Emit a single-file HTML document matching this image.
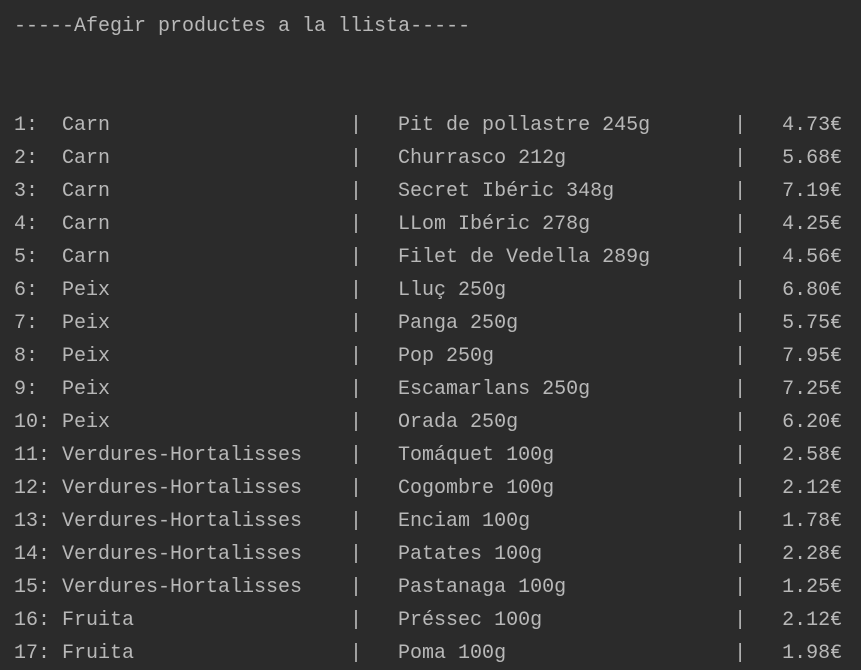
<!DOCTYPE html>
<html><head><meta charset="utf-8"><style>
html,body{margin:0;padding:0;background:#2b2b2b;width:861px;height:670px;overflow:hidden}
.t{position:absolute;left:14px;top:10px;font-family:"Liberation Mono",monospace;font-size:20px;line-height:33px;color:#b8b8b8;white-space:pre}
.r span{display:inline-block;white-space:pre}
.a{width:28ch}.b{width:4ch}.c{width:28ch}
</style></head><body><div class="t"><div>-----Afegir productes a la llista-----</div><div>&nbsp;</div><div>&nbsp;</div><div class="r"><span class="a">1:  Carn</span><span class="b">|</span><span class="c">Pit de pollastre 245g</span><span class="b">|</span><span>4.73€</span></div><div class="r"><span class="a">2:  Carn</span><span class="b">|</span><span class="c">Churrasco 212g</span><span class="b">|</span><span>5.68€</span></div><div class="r"><span class="a">3:  Carn</span><span class="b">|</span><span class="c">Secret Ibéric 348g</span><span class="b">|</span><span>7.19€</span></div><div class="r"><span class="a">4:  Carn</span><span class="b">|</span><span class="c">LLom Ibéric 278g</span><span class="b">|</span><span>4.25€</span></div><div class="r"><span class="a">5:  Carn</span><span class="b">|</span><span class="c">Filet de Vedella 289g</span><span class="b">|</span><span>4.56€</span></div><div class="r"><span class="a">6:  Peix</span><span class="b">|</span><span class="c">Lluç 250g</span><span class="b">|</span><span>6.80€</span></div><div class="r"><span class="a">7:  Peix</span><span class="b">|</span><span class="c">Panga 250g</span><span class="b">|</span><span>5.75€</span></div><div class="r"><span class="a">8:  Peix</span><span class="b">|</span><span class="c">Pop 250g</span><span class="b">|</span><span>7.95€</span></div><div class="r"><span class="a">9:  Peix</span><span class="b">|</span><span class="c">Escamarlans 250g</span><span class="b">|</span><span>7.25€</span></div><div class="r"><span class="a">10: Peix</span><span class="b">|</span><span class="c">Orada 250g</span><span class="b">|</span><span>6.20€</span></div><div class="r"><span class="a">11: Verdures-Hortalisses</span><span class="b">|</span><span class="c">Tomáquet 100g</span><span class="b">|</span><span>2.58€</span></div><div class="r"><span class="a">12: Verdures-Hortalisses</span><span class="b">|</span><span class="c">Cogombre 100g</span><span class="b">|</span><span>2.12€</span></div><div class="r"><span class="a">13: Verdures-Hortalisses</span><span class="b">|</span><span class="c">Enciam 100g</span><span class="b">|</span><span>1.78€</span></div><div class="r"><span class="a">14: Verdures-Hortalisses</span><span class="b">|</span><span class="c">Patates 100g</span><span class="b">|</span><span>2.28€</span></div><div class="r"><span class="a">15: Verdures-Hortalisses</span><span class="b">|</span><span class="c">Pastanaga 100g</span><span class="b">|</span><span>1.25€</span></div><div class="r"><span class="a">16: Fruita</span><span class="b">|</span><span class="c">Préssec 100g</span><span class="b">|</span><span>2.12€</span></div><div class="r"><span class="a">17: Fruita</span><span class="b">|</span><span class="c">Poma 100g</span><span class="b">|</span><span>1.98€</span></div></div></body></html>
